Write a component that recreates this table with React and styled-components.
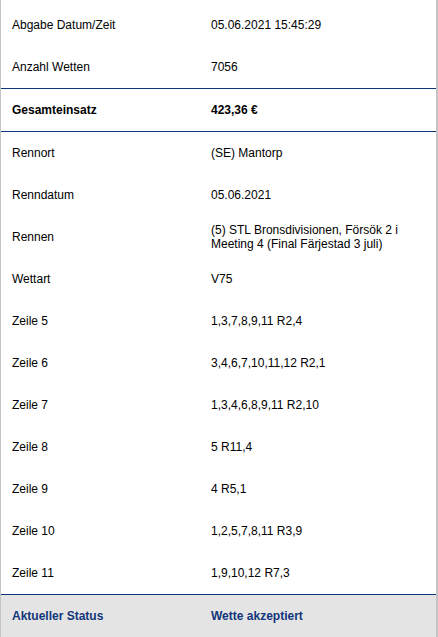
import React from "react";
import styled, { createGlobalStyle } from "styled-components";

const Global = createGlobalStyle`
  html, body { margin: 0; padding: 0; background: #fff; }
  body { font-family: "Liberation Sans", Arial, sans-serif; }
`;

const Panel = styled.div`
  box-sizing: border-box;
  width: 438px;
  height: 637px;
  padding-top: 4px;
  border-left: 1px solid #c4c4c4;
  border-right: 2px solid #c4c4c4;
  background: #fff;
  display: flex;
  flex-direction: column;
  overflow: hidden;
`;

const Row = styled.div`
  display: grid;
  grid-template-columns: 199px 1fr;
  min-height: 42px;
  box-sizing: border-box;
  align-items: center;
  font-size: 12px;
  line-height: 14.5px;
  color: ${(p) => (p.$status ? "#12367a" : "#000")};
  font-weight: ${(p) => (p.$strong || p.$status ? 700 : 400)};
  background: ${(p) => (p.$status ? "#e4e4e4" : "transparent")};
  border-top: ${(p) => (p.$lineTop ? "1px solid #0d3677" : "none")};
  border-bottom: ${(p) => (p.$lineBottom ? "1px solid #0d3677" : "none")};
  ${(p) => (p.$strong ? "min-height: 44px;" : "")}
  ${(p) => (p.$status ? "flex: 1;" : "")}
`;

const Label = styled.div`
  padding: 0 11px;
`;

const Value = styled.div`
  padding: 0 11px;
`;

const rows = [
  ["Abgabe Datum/Zeit", "05.06.2021 15:45:29"],
  ["Anzahl Wetten", "7056"],
  ["Gesamteinsatz", "423,36 €", "strong"],
  ["Rennort", "(SE) Mantorp"],
  ["Renndatum", "05.06.2021"],
  ["Rennen", "(5) STL Bronsdivisionen, Försök 2 i Meeting 4 (Final Färjestad 3 juli)"],
  ["Wettart", "V75"],
  ["Zeile 5", "1,3,7,8,9,11 R2,4"],
  ["Zeile 6", "3,4,6,7,10,11,12 R2,1"],
  ["Zeile 7", "1,3,4,6,8,9,11 R2,10"],
  ["Zeile 8", "5 R11,4"],
  ["Zeile 9", "4 R5,1"],
  ["Zeile 10", "1,2,5,7,8,11 R3,9"],
  ["Zeile 11", "1,9,10,12 R7,3"],
];

export default function App() {
  return (
    <>
      <Global />
      <Panel>
        {rows.map(([l, v, kind]) => (
          <Row
            key={l}
            $strong={kind === "strong"}
            $lineTop={kind === "strong"}
            $lineBottom={kind === "strong"}
          >
            <Label>{l}</Label>
            <Value>{v}</Value>
          </Row>
        ))}
        <Row $status $lineTop>
          <Label>Aktueller Status</Label>
          <Value>Wette akzeptiert</Value>
        </Row>
      </Panel>
    </>
  );
}
